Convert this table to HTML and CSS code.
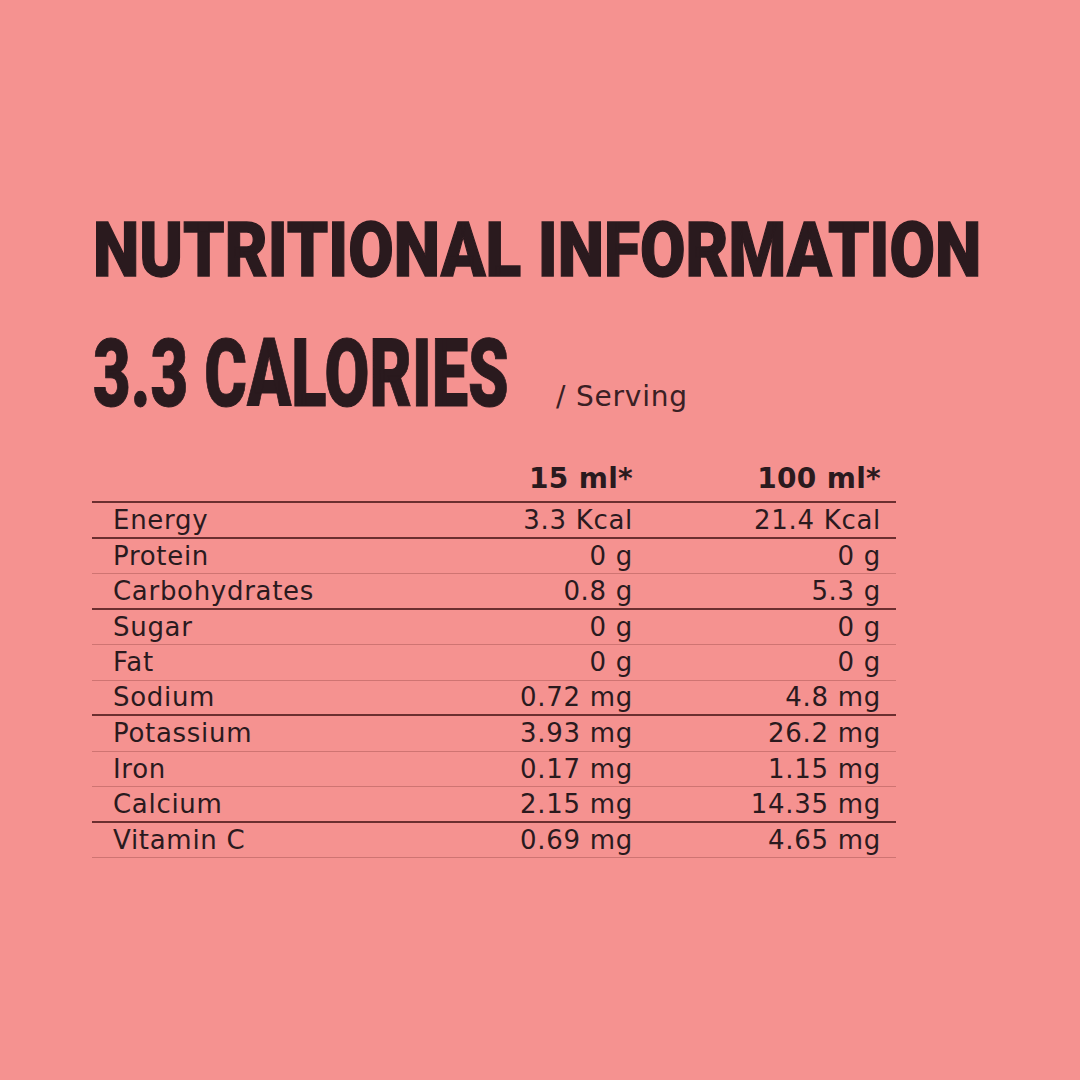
FILE: index.html
```html
<!DOCTYPE html>
<html>
<head>
<meta charset="utf-8">
<link rel="stylesheet" href="styles.css">
</head>
<body>
<main class="page">
  <h1 class="title"><span class="cond">NUTRITIONAL INFORMATION</span></h1>
  <div class="cal-row">
    <h2 class="calories"><span class="cond">3.3 CALORIES</span></h2>
    <span class="serving">/ Serving</span>
  </div>
  <div class="table">
    <div class="row head"><span></span><span class="v">15 ml*</span><span class="v">100 ml*</span></div>
    <div class="row dark"><span class="l">Energy</span><span class="v">3.3 Kcal</span><span class="v">21.4 Kcal</span></div>
    <div class="row"><span class="l">Protein</span><span class="v">0 g</span><span class="v">0 g</span></div>
    <div class="row dark"><span class="l">Carbohydrates</span><span class="v">0.8 g</span><span class="v">5.3 g</span></div>
    <div class="row"><span class="l">Sugar</span><span class="v">0 g</span><span class="v">0 g</span></div>
    <div class="row"><span class="l">Fat</span><span class="v">0 g</span><span class="v">0 g</span></div>
    <div class="row dark"><span class="l">Sodium</span><span class="v">0.72 mg</span><span class="v">4.8 mg</span></div>
    <div class="row"><span class="l">Potassium</span><span class="v">3.93 mg</span><span class="v">26.2 mg</span></div>
    <div class="row"><span class="l">Iron</span><span class="v">0.17 mg</span><span class="v">1.15 mg</span></div>
    <div class="row dark"><span class="l">Calcium</span><span class="v">2.15 mg</span><span class="v">14.35 mg</span></div>
    <div class="row"><span class="l">Vitamin C</span><span class="v">0.69 mg</span><span class="v">4.65 mg</span></div>
  </div>
</main>
</body>
</html>
```

FILE: styles.css
```css
html, body {
  margin: 0;
  padding: 0;
  background: #f59290;
}
.page {
  width: 1080px;
  height: 1080px;
  box-sizing: border-box;
  padding: 212px 0 0 93px;
  color: #2a1a1e;
  overflow: hidden;
}
.title, .calories {
  margin: 0;
  font-family: "Roboto", "Liberation Sans", sans-serif;
  font-weight: 900;
  line-height: 1;
  white-space: nowrap;
}
.cond {
  display: inline-block;
  transform-origin: left top;
  -webkit-text-stroke: 1px #2a1a1e;
}
.title {
  font-size: 60px;
  height: 80px;
}
.title .cond {
  transform: scale(1.099, 1.27);
}
.cal-row {
  display: flex;
  align-items: baseline;
  margin-top: 34px;
  height: 96px;
}
.calories {
  font-size: 95px;
  width: 463px;
}
.calories .cond {
  transform: scaleX(0.685);
}
.serving {
  font-family: "DejaVu Sans", "Open Sans", sans-serif;
  font-size: 28px;
  letter-spacing: 0.8px;
  color: #3a2024;
}
.table {
  width: 804px;
  margin-top: 37px;
  margin-left: -1px;
  font-family: "DejaVu Sans", "Open Sans", sans-serif;
  font-size: 26px;
  letter-spacing: 0.7px;
}
.row {
  display: grid;
  grid-template-columns: 1fr 248px 248px;
  height: 35.5px;
  align-items: center;
  border-bottom: 1px solid #cf7472;
  box-sizing: border-box;
}
.row.dark, .row.head {
  border-bottom: 2px solid #6b2f30;
}
.row.head {
  height: 44px;
  font-size: 28px;
  font-weight: 700;
  letter-spacing: 0.3px;
  align-items: end;
  padding-bottom: 6px;
}
.l {
  padding-left: 21px;
}
.v {
  text-align: right;
  padding-right: 15px;
}
```
